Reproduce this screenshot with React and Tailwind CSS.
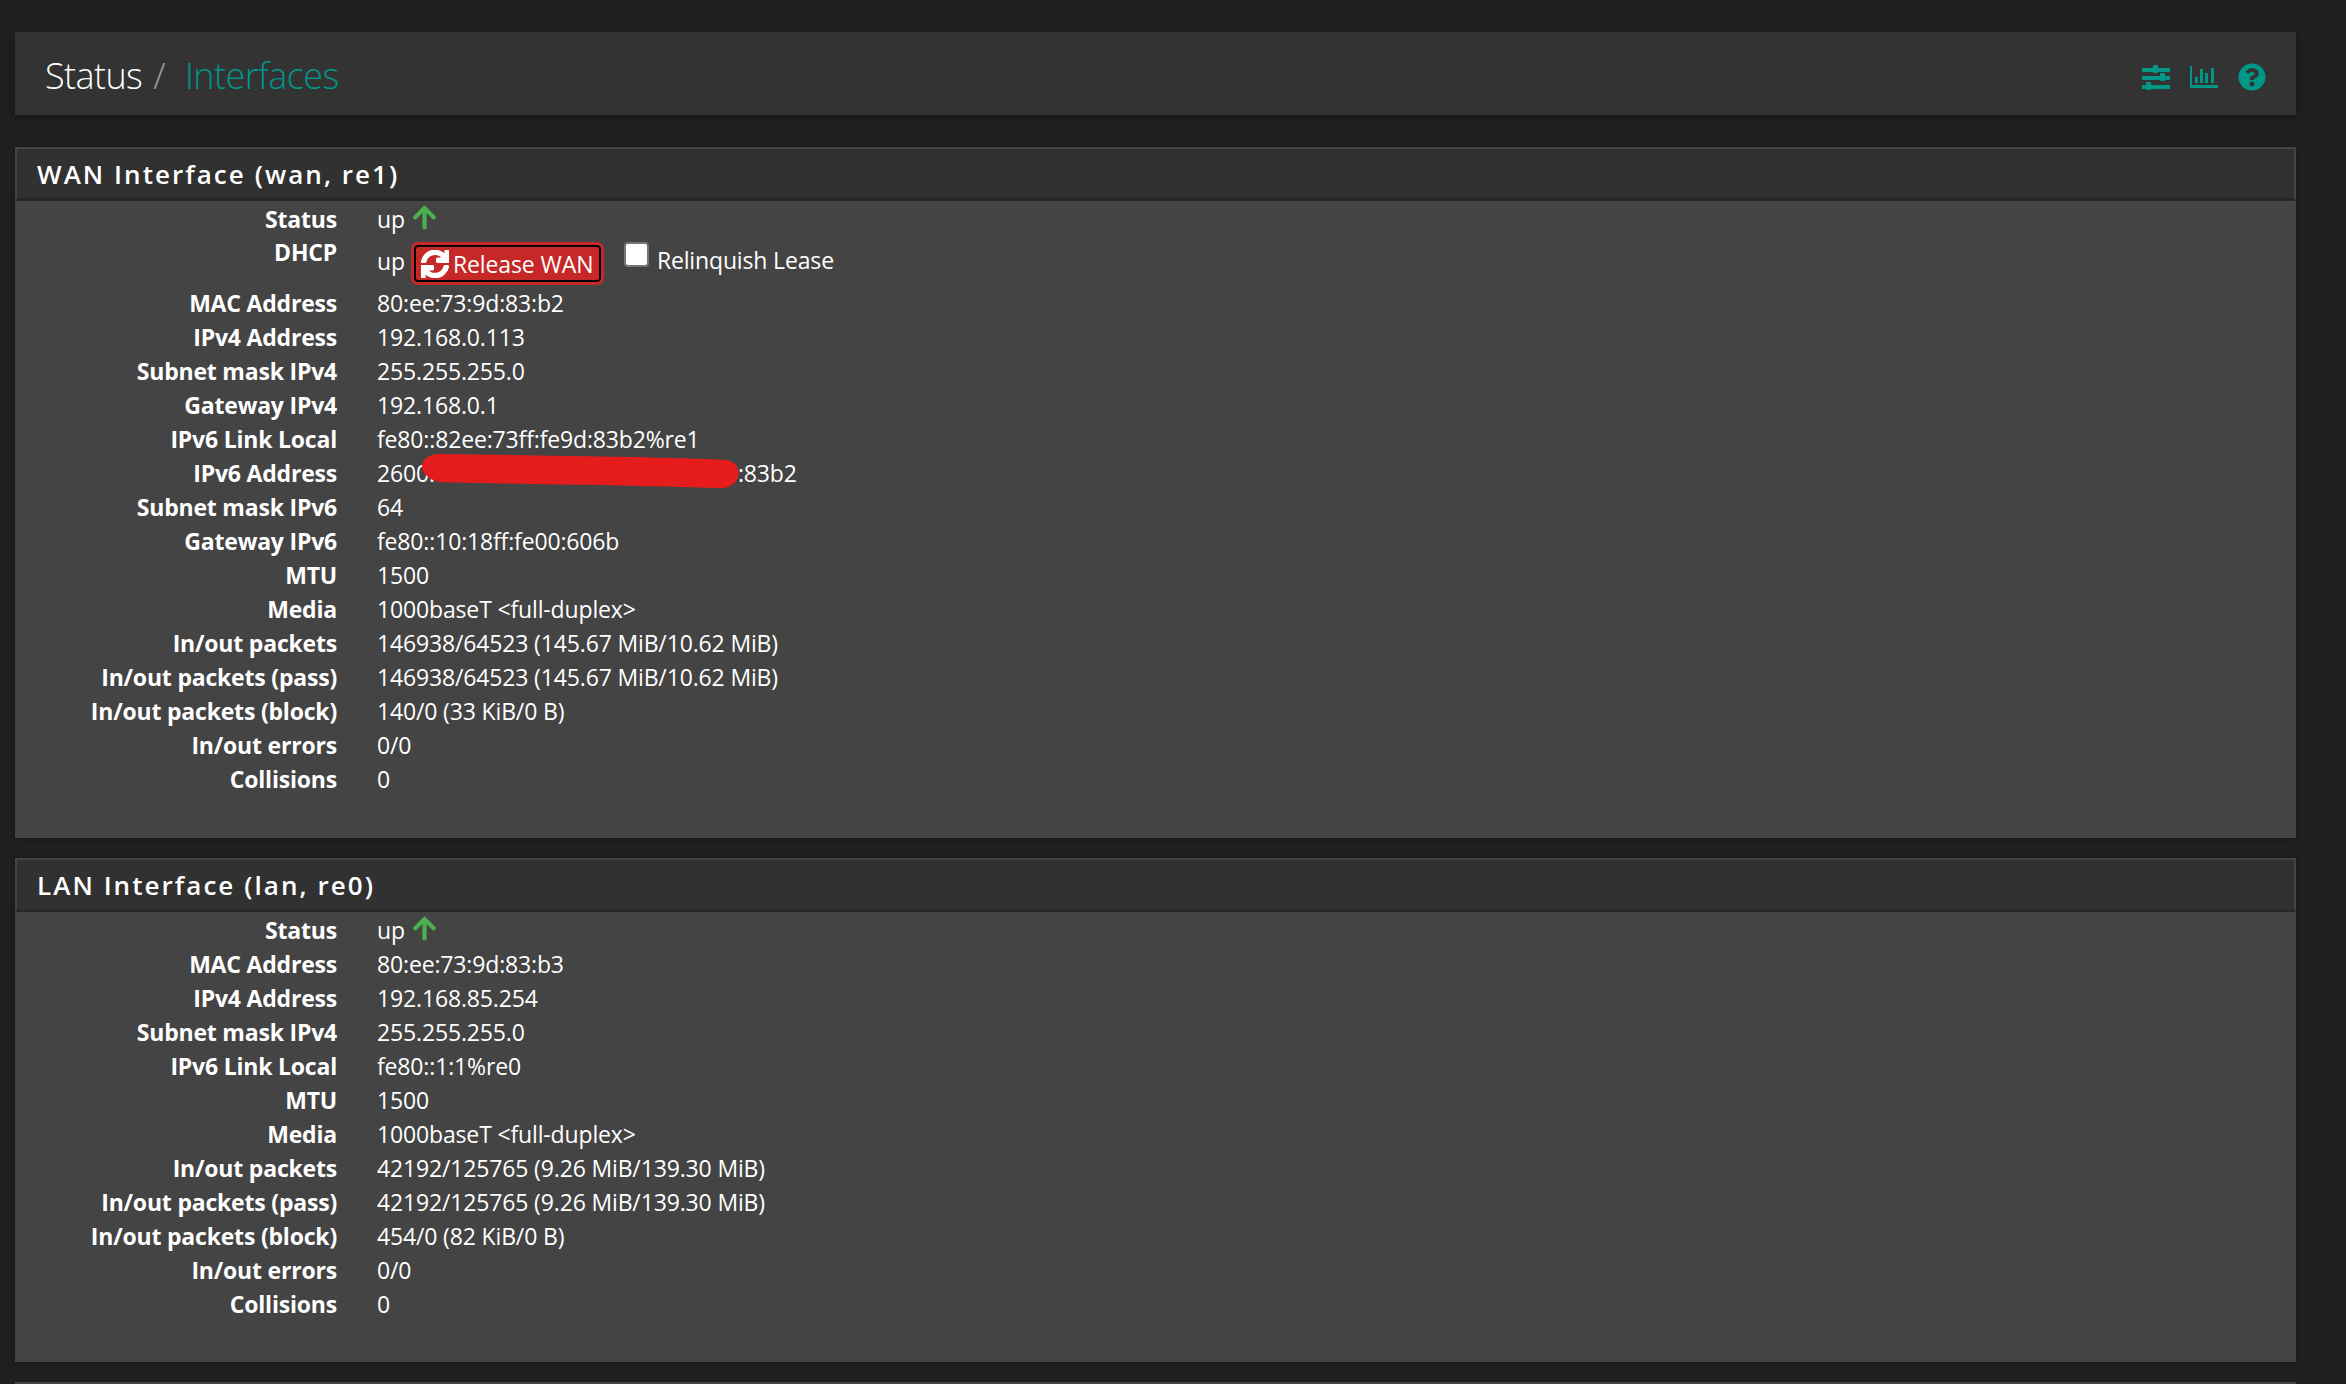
import { FaArrowUp, FaQuestionCircle, FaSync } from 'react-icons/fa';

const wanRows = [
  ['MAC Address', '80:ee:73:9d:83:b2'],
  ['IPv4 Address', '192.168.0.113'],
  ['Subnet mask IPv4', '255.255.255.0'],
  ['Gateway IPv4', '192.168.0.1'],
  ['IPv6 Link Local', 'fe80::82ee:73ff:fe9d:83b2%re1'],
  ['IPv6 Address', 'redacted'],
  ['Subnet mask IPv6', '64'],
  ['Gateway IPv6', 'fe80::10:18ff:fe00:606b'],
  ['MTU', '1500'],
  ['Media', '1000baseT <full-duplex>'],
  ['In/out packets', '146938/64523 (145.67 MiB/10.62 MiB)'],
  ['In/out packets (pass)', '146938/64523 (145.67 MiB/10.62 MiB)'],
  ['In/out packets (block)', '140/0 (33 KiB/0 B)'],
  ['In/out errors', '0/0'],
  ['Collisions', '0'],
];

const lanRows = [
  ['MAC Address', '80:ee:73:9d:83:b3'],
  ['IPv4 Address', '192.168.85.254'],
  ['Subnet mask IPv4', '255.255.255.0'],
  ['IPv6 Link Local', 'fe80::1:1%re0'],
  ['MTU', '1500'],
  ['Media', '1000baseT <full-duplex>'],
  ['In/out packets', '42192/125765 (9.26 MiB/139.30 MiB)'],
  ['In/out packets (pass)', '42192/125765 (9.26 MiB/139.30 MiB)'],
  ['In/out packets (block)', '454/0 (82 KiB/0 B)'],
  ['In/out errors', '0/0'],
  ['Collisions', '0'],
];

const Row = ({ label, children, className = 'h-[34px] items-center pt-[3px]' }) => (
  <div className={`flex ${className}`}>
    <div className="w-[322px] shrink-0 text-right font-bold tracking-[-0.2px]">{label}</div>
    <div className="ml-[40px] tracking-[-0.15px]">{children}</div>
  </div>
);

const StatusUp = () => (
  <Row label="Status">
    <span className="flex items-center">
      up
      <FaArrowUp className="ml-[6px] -mt-[5px] text-[27px] text-[#4caf50]" />
    </span>
  </Row>
);

const Redacted = () => (
  <span className="relative block">
    <span>2600:</span>
    <span className="inline-block w-[303px]" />
    <span>:83b2</span>
    <svg className="absolute left-[44px] -top-[2px] w-[319px] h-[35px]" viewBox="0 0 310 36" preserveAspectRatio="none">
      <path
        d="M16 0 C90 1 240 3 295 6 C308 8 310 16 308 24 C305 33 297 36 286 35 C200 32 90 31 20 29 C8 28 2 20 1 14 C1 6 6 1 16 0 Z"
        fill="#e61c1c"
      />
    </svg>
  </span>
);

const Panel = ({ title, children, className = '' }) => (
  <section className={`bg-[#444444] shadow-[0_1px_4px_rgba(0,0,0,0.3)] ${className}`}>
    <h2 className="h-[54px] flex items-center pl-[20px] pt-[1px] bg-[#313131] border-[2px] border-[#454545] border-b-[3px] border-b-[#282828] text-[26px] leading-none font-semibold tracking-[2.05px] text-white">
      {title}
    </h2>
    <div className="text-[23px] text-white">{children}</div>
  </section>
);

export default function App() {
  return (
    <div className="min-h-[1384px] overflow-hidden bg-[#1f1f1f] pt-[32px] pl-[15px] pr-[50px] font-['Open_Sans','Noto_Sans',sans-serif]">
      <header className="h-[83px] flex items-center justify-between bg-[#333333] pt-[4px] pl-[30px] pr-[30px] shadow-[0_2px_6px_rgba(0,0,0,0.3)]">
        <div className="flex items-baseline text-[36px] font-light tracking-[-0.6px] text-white">
          <span>Status</span>
          <span className="ml-[11px] text-[#9a9a9a]">/</span>
          <span className="ml-[20px] text-[#009688]">Interfaces</span>
        </div>
        <div className="flex items-center mt-[3px] text-[#009688]">
          <svg className="w-[28px] h-[26px]" viewBox="0 0 28 26" fill="currentColor">
            <rect x="0" y="4" width="28" height="4" />
            <rect x="11" y="1" width="5" height="8" rx="1" />
            <rect x="0" y="12" width="28" height="4" />
            <rect x="18" y="9" width="5" height="8" rx="1" />
            <rect x="0" y="21" width="28" height="4" />
            <rect x="4" y="18" width="5" height="8" rx="1" />
          </svg>
          <svg className="w-[28px] h-[22px] ml-[20px]" viewBox="0 0 28 22" fill="currentColor">
            <rect x="0" y="0" width="2" height="22" />
            <rect x="0" y="19" width="28" height="3" />
            <rect x="5" y="11" width="3" height="6" />
            <rect x="10" y="3" width="3" height="14" />
            <rect x="15" y="7" width="3" height="10" />
            <rect x="21" y="2" width="3" height="15" />
          </svg>
          <FaQuestionCircle className="ml-[20px] text-[28px]" />
        </div>
      </header>

      <Panel title="WAN Interface (wan, re1)" className="mt-[32px] h-[691px]">
        <StatusUp />
        <Row label="DHCP" className="h-[50px] items-start">
          <div className="flex items-start">
            <span className="mt-[9px]">up</span>
            <button className="ml-[9px] mt-[10px] h-[37px] w-[187px] flex items-center rounded-[4px] bg-[#c62828] border-[2px] border-black outline-[3px] outline-[#c62828] pl-[5px] pt-[2px] text-white text-[23px] tracking-[-0.1px]">
              <FaSync className="text-[28px] shrink-0 -mt-[2px]" stroke="currentColor" strokeWidth={28} />
              <span className="ml-[4px]">Release WAN</span>
            </button>
            <input
              type="checkbox"
              readOnly
              className="ml-[23px] mt-[7px] w-[25px] h-[25px] appearance-none rounded-[4px] bg-white border-[2px] border-[#767676]"
            />
            <span className="ml-[8px] mt-[8px]">Relinquish Lease</span>
          </div>
        </Row>
        {wanRows.map(([label, value]) => (
          <Row key={label} label={label}>
            {value === 'redacted' ? <Redacted /> : value}
          </Row>
        ))}
      </Panel>

      <Panel title="LAN Interface (lan, re0)" className="mt-[20px] h-[504px]">
        <StatusUp />
        {lanRows.map(([label, value]) => (
          <Row key={label} label={label}>
            {value}
          </Row>
        ))}
      </Panel>

      <div className="mt-[20px] h-[40px] bg-[#444444]" />
    </div>
  );
}
